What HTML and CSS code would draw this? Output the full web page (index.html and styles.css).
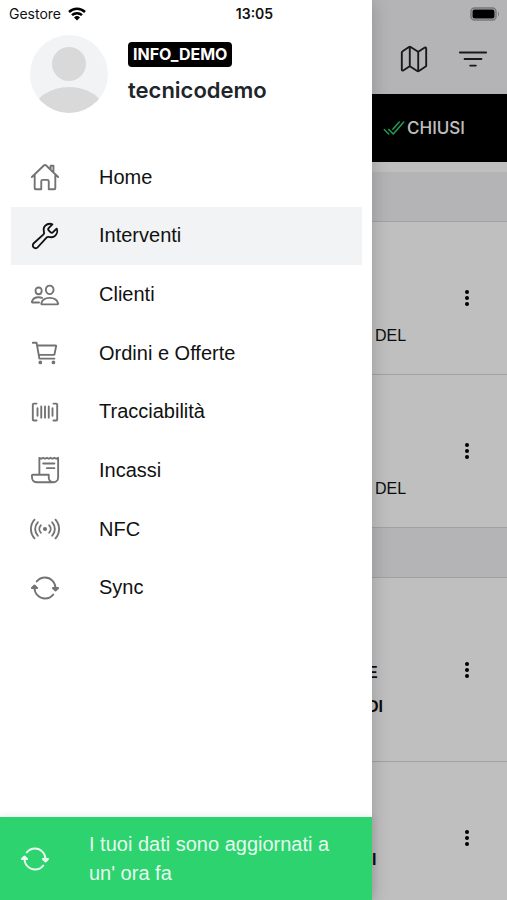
FILE: index.html
```html
<!DOCTYPE html>
<html lang="it">
<head>
<meta charset="utf-8">
<meta name="viewport" content="width=device-width, initial-scale=1">
<title>Interventi</title>
<link rel="stylesheet" href="styles.css">
</head>
<body>
<div class="app">
  <main class="page">
    <header class="toolbar">
      <button class="icon-button" type="button" aria-label="Mappa"><svg class="icon" viewBox="0 0 512 512"><path d="M313.27 124.64L198.73 51.36a32 32 0 00-29.28.35L56.51 127.49A16 16 0 0048 141.63v295.8a16 16 0 0023.49 14.14l97.82-63.79a32 32 0 0129.5-.24l111.86 73a32 32 0 0029.27-.11l115.43-75.94a16 16 0 008.63-14.2V74.57a16 16 0 00-23.49-14.14l-98 63.86a32 32 0 01-29.24.35zM328 128v336M184 48v336"/></svg></button>
      <button class="icon-button" type="button" aria-label="Filtra"><svg class="icon" viewBox="0 0 512 512"><path d="M32 144h448M112 256h288M208 368h96"/></svg></button>
    </header>
    <div class="tabs">
      <button class="tab" type="button"><svg class="icon icon-check" viewBox="0 0 512 512"><path d="M464 128L240 384l-96-96M144 384l-96-96M368 128L232 284"/></svg>CHIUSI</button>
    </div>
    <section class="list">
      <div class="divider"></div>
      <article class="job">
        <p class="job-text">DEL</p>
        <button class="more" type="button" aria-label="Altro"><svg viewBox="0 0 20 20"><circle cx="10" cy="4" r="2"/><circle cx="10" cy="10" r="2"/><circle cx="10" cy="16" r="2"/></svg></button>
      </article>
      <article class="job">
        <p class="job-text">DEL</p>
        <button class="more" type="button" aria-label="Altro"><svg viewBox="0 0 20 20"><circle cx="10" cy="4" r="2"/><circle cx="10" cy="10" r="2"/><circle cx="10" cy="16" r="2"/></svg></button>
      </article>
      <div class="divider"></div>
      <article class="job job-tall">
        <p class="job-text job-title">E<br>DI</p>
        <button class="more" type="button" aria-label="Altro"><svg viewBox="0 0 20 20"><circle cx="10" cy="4" r="2"/><circle cx="10" cy="10" r="2"/><circle cx="10" cy="16" r="2"/></svg></button>
      </article>
      <article class="job">
        <p class="job-text job-title job-title-short">I</p>
        <button class="more" type="button" aria-label="Altro"><svg viewBox="0 0 20 20"><circle cx="10" cy="4" r="2"/><circle cx="10" cy="10" r="2"/><circle cx="10" cy="16" r="2"/></svg></button>
      </article>
    </section>
  </main>

  <div class="backdrop"></div>

  <aside class="drawer">
    <div class="profile">
      <svg class="avatar" viewBox="0 0 78 78">
        <clipPath id="disc"><circle cx="39" cy="39" r="39"/></clipPath>
        <g clip-path="url(#disc)">
          <rect width="78" height="78" fill="#f1f3f5"/>
          <circle cx="39" cy="29" r="17" fill="#d9d9d9"/>
          <ellipse cx="39" cy="78" rx="36" ry="26" fill="#d9d9d9"/>
        </g>
      </svg>
      <div class="identity">
        <span class="badge">INFO_DEMO</span>
        <strong class="username">tecnicodemo</strong>
      </div>
    </div>

    <nav class="menu">
      <a class="menu-item" href="#home"><svg class="icon" viewBox="0 0 512 512"><path d="M80 212v236a16 16 0 0016 16h96V328a24 24 0 0124-24h80a24 24 0 0124 24v136h96a16 16 0 0016-16V212M480 256L266.89 52c-5-5.28-16.69-5.34-21.78 0L32 256M400 179V64h-48v69"/></svg>Home</a>
      <a class="menu-item active" href="#interventi"><svg class="icon" viewBox="0 0 512 512"><path d="M393.87 190a32.1 32.1 0 01-45.25 0l-26.57-26.57a32.09 32.09 0 010-45.26L382.19 58a1 1 0 00-.3-1.64c-38.82-16.64-89.15-8.16-121.11 23.57-30.58 30.35-32.32 76-21.12 115.84a31.93 31.93 0 01-9.06 32.08L64 380a48.17 48.17 0 1068 68l153.86-167a31.93 31.93 0 0131.6-9.13c39.54 10.59 84.54 8.6 114.72-21.19 32.49-32 39.5-88.56 23.75-120.93a1 1 0 00-1.6-.26z"/></svg>Interventi</a>
      <a class="menu-item" href="#clienti"><svg class="icon" viewBox="0 0 512 512"><path d="M402 168c-2.93 40.67-33.1 72-66 72s-63.12-31.32-66-72c-3-42.31 26.37-72 66-72s69 30.46 66 72zM336 304c-65.17 0-127.84 32.37-143.54 95.41-2.08 8.34 3.15 16.59 11.72 16.59h263.65c8.57 0 13.77-8.25 11.72-16.59C463.85 335.36 401.18 304 336 304zM200 185.94c-2.34 32.48-26.72 58.06-53 58.06s-50.7-25.57-53-58.06C91.61 152.15 115.34 128 147 128s55.39 24.77 53 57.94zM206 306c-18.05-8.27-37.93-11.45-59-11.45-52 0-102.1 25.85-114.65 76.2-1.65 6.66 2.53 13.25 9.37 13.25H154"/></svg>Clienti</a>
      <a class="menu-item" href="#ordini"><svg class="icon" viewBox="0 0 512 512"><path d="M48 80h64l48 272h256M160 288h249.44a8 8 0 007.85-6.43l28.8-144a8 8 0 00-7.85-9.57H128"/><circle cx="176" cy="416" r="16"/><circle cx="400" cy="416" r="16"/></svg>Ordini e Offerte</a>
      <a class="menu-item" href="#tracciabilita"><svg class="icon" viewBox="0 0 512 512"><path d="M400 400.33h48a16 16 0 0016-16v-256a16 16 0 00-16-16h-48M112 112.33H64a16 16 0 00-16 16v256a16 16 0 0016 16h48M384 192.33v128M320 160.33v192M256 160.33v192M192 160.33v192M128 192.33v128"/></svg>Tracciabilità</a>
      <a class="menu-item" href="#incassi"><svg class="icon" viewBox="0 0 512 512"><path d="M160 336V48l32 16 32-16 31.94 16 32.37-16L320 64l31.79-16 31.93 16L416 48l32.01 16L480 48v224M480 272v112a80 80 0 01-80 80a80 80 0 01-80-80v-48H48a15.86 15.86 0 00-16 16c0 64 6.74 112 80 112h288M224 144h192M288 224h128"/></svg>Incassi</a>
      <a class="menu-item" href="#nfc"><svg class="icon" viewBox="0 0 512 512"><circle cx="256" cy="256" r="20" fill="currentColor"/><path d="M184.25 192.25a96 96 0 000 127.52M327.77 319.77a96 96 0 000-127.52M133.28 141.28a168 168 0 000 229.44M378.72 370.72a168 168 0 000-229.44M435 416a240.34 240.34 0 000-320M77 96a240.34 240.34 0 000 320"/></svg>NFC</a>
      <a class="menu-item" href="#sync"><svg class="icon" viewBox="0 0 512 512"><path d="M434.67 285.59v-29.8c0-98.73-80.24-178.79-179.2-178.79a179 179 0 00-140.14 67.36m-38.53 82v29.8C76.8 355 157 435 256 435a180.45 180.45 0 00140-66.92"/><path d="M32 256l44-44 46 44zM480 256l-44 44-46-44z" fill="currentColor"/></svg>Sync</a>
    </nav>

    <footer class="sync-status">
      <svg class="icon icon-sync" viewBox="0 0 512 512"><path d="M434.67 285.59v-29.8c0-98.73-80.24-178.79-179.2-178.79a179 179 0 00-140.14 67.36m-38.53 82v29.8C76.8 355 157 435 256 435a180.45 180.45 0 00140-66.92"/><path d="M32 256l44-44 46 44zM480 256l-44 44-46-44z" fill="currentColor"/></svg>
      <p class="sync-text">I tuoi dati sono aggiornati a un' ora fa</p>
    </footer>
  </aside>

  <div class="status-bar">
    <div class="carrier">Gestore
      <svg class="wifi" viewBox="0 0 18 14"><path d="M1 5a11.500 11.500 0 0116 0M4 8.200a7.200 7.200 0 0110 0"/><path class="wifi-dot" d="M9 13.500l-3-3a4.300 4.300 0 016 0z"/></svg>
    </div>
    <time class="clock">13:05</time>
    <svg class="battery" viewBox="0 0 30 14"><rect x="1" y="1" width="25" height="12" rx="3.500" fill="none" stroke="#77777a" stroke-width="1.500"/><rect x="2.500" y="2.500" width="22" height="9" rx="2"/><path d="M28 4.500q2 2.500 0 5z" fill="#77777a"/></svg>
  </div>
</div>
</body>
</html>
```
FILE: styles.css
```css
* { box-sizing: border-box; }

body {
  margin: 0;
  background: #fff;
  color: #111;
  font-family: "Liberation Sans", Helvetica, Arial, sans-serif;
}

button {
  padding: 0;
  border: 0;
  background: none;
  color: inherit;
  font: inherit;
}

p { margin: 0; }

.app {
  position: relative;
  height: 100vh;
  overflow: hidden;
}

.icon {
  display: block;
  flex: none;
  width: 30px;
  height: 30px;
  fill: none;
  stroke: currentColor;
  stroke-width: 32;
  stroke-linecap: round;
  stroke-linejoin: round;
}

/* Page under the drawer */
.toolbar {
  display: flex;
  justify-content: flex-end;
  gap: 29px;
  height: 94px;
  padding: 44px 19px 0 0;
  background: #f1f1f3;
  color: #222;
}

.icon-button { height: 30px; }

.tabs {
  display: flex;
  justify-content: flex-end;
  height: 68px;
  padding-right: 42px;
  background: #000;
}

.tab {
  display: flex;
  align-items: center;
  gap: 1px;
  color: #fff;
  font: 500 17px Inter, sans-serif;
}

.icon-check {
  width: 24px;
  height: 24px;
  color: #2dd36f;
}

.list { padding-top: 10px; }

.divider {
  height: 50px;
  background: #f0f0f5;
  border-bottom: 1px solid #d8d8da;
}

.job {
  display: flex;
  align-items: flex-end;
  justify-content: space-between;
  height: 153px;
  padding: 0 30px 0 375px;
  border-bottom: 1px solid #d8d8da;
}

.job-tall { height: 184px; }

.job-text {
  padding-bottom: 21px;
  font-size: 16px;
  line-height: 34px;
}

.job-title {
  margin-left: -8px;
  padding-bottom: 37px;
  font-weight: 700;
}

.job-title-short { margin-left: -3px; }

.more {
  align-self: center;
  width: 20px;
  height: 20px;
}

.more svg {
  display: block;
  width: 20px;
  height: 20px;
}

.backdrop {
  position: absolute;
  inset: 0;
  background: rgba(0, 0, 0, 0.25);
}

/* Side menu */
.drawer {
  position: absolute;
  inset: 0 auto 0 0;
  display: flex;
  flex-direction: column;
  width: calc(100% - 135px);
  background: #fff;
  box-shadow: 0 0 18px rgba(0, 0, 0, 0.2);
}

.profile {
  display: flex;
  gap: 20px;
  padding: 35px 30px 0;
}

.avatar {
  width: 78px;
  height: 78px;
}

.identity {
  display: flex;
  flex-direction: column;
  align-items: flex-start;
  gap: 9px;
  padding-top: 7px;
  font-family: Inter, sans-serif;
}

.badge {
  padding: 0 5px;
  border-radius: 4px;
  background: #000;
  color: #fff;
  font-size: 16px;
  font-weight: 700;
  line-height: 25px;
}

.username {
  color: #212529;
  font-size: 22px;
  font-weight: 600;
  line-height: 28px;
}

.menu {
  display: grid;
  grid-auto-rows: 1fr;
  height: 469px;
  margin: 35px 10px 0 11px;
}

.menu-item {
  display: flex;
  align-items: center;
  gap: 39px;
  padding-left: 19px;
  color: #111;
  font-size: 20px;
  text-decoration: none;
}

.menu-item .icon { color: #737373; }

.active { background: #f1f3f5; }

.menu-item.active .icon { color: #111; }

.sync-status {
  display: flex;
  align-items: center;
  gap: 39px;
  margin-top: auto;
  padding: 13px 30px 12px 20px;
  background: #2dd36f;
  box-shadow: 0 0 8px rgba(0, 0, 0, 0.1);
  color: #e6faee;
  font-size: 20px;
  line-height: 29px;
}

/* Device status bar */
.status-bar {
  position: absolute;
  inset: 0 0 auto;
  display: grid;
  grid-template-columns: 1fr auto 1fr;
  align-items: center;
  height: 27px;
  padding: 0 7px 0 9px;
  font: 14px Inter, sans-serif;
}

.carrier {
  display: flex;
  align-items: center;
  gap: 7px;
}

.wifi {
  width: 18px;
  height: 14px;
  fill: none;
  stroke: #000;
  stroke-width: 2.500;
}

.wifi-dot {
  fill: #000;
  stroke: none;
}

.clock { font-weight: 600; }

.battery {
  justify-self: end;
  width: 30px;
  height: 14px;
}
```
